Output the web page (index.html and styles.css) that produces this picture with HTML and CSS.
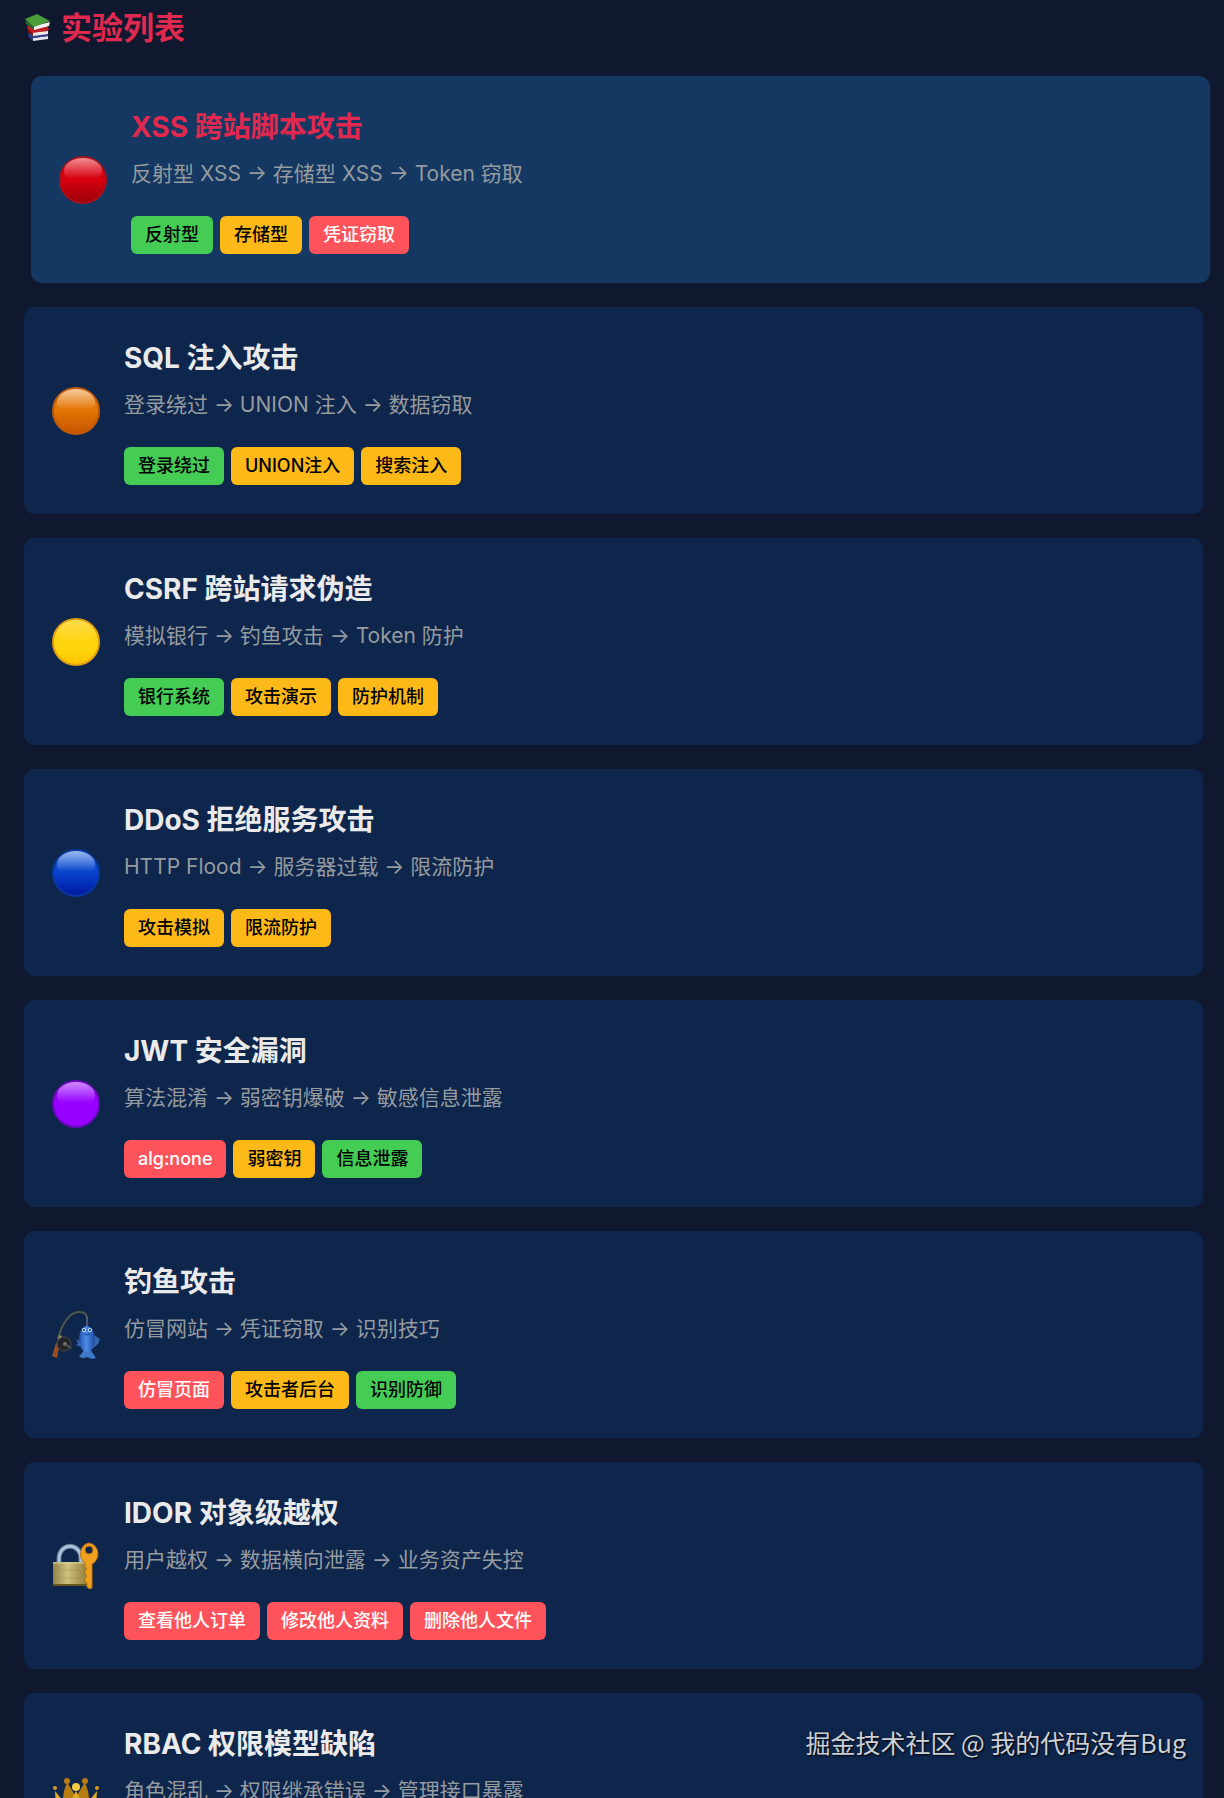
FILE: index.html
```html
<!DOCTYPE html>
<html lang="zh-CN">
<head>
<meta charset="utf-8">
<title>实验列表</title>
<link rel="stylesheet" href="styles.css">
</head>
<body>
<svg class="defs" aria-hidden="true">
  <defs>
    <linearGradient id="red" x1="0" y1="0" x2="0" y2="1"><stop offset="0" stop-color="#e2000f"/><stop offset=".5" stop-color="#d6000f"/><stop offset="1" stop-color="#9c0008"/></linearGradient>
    <linearGradient id="orange" x1="0" y1="0" x2="0" y2="1"><stop offset="0" stop-color="#ee8a1c"/><stop offset=".5" stop-color="#e27406"/><stop offset="1" stop-color="#c65400"/></linearGradient>
    <linearGradient id="yellow" x1="0" y1="0" x2="0" y2="1"><stop offset="0" stop-color="#ffd21c"/><stop offset=".6" stop-color="#ffd60e"/><stop offset="1" stop-color="#fbc400"/></linearGradient>
    <linearGradient id="blue" x1="0" y1="0" x2="0" y2="1"><stop offset="0" stop-color="#1f66dc"/><stop offset=".5" stop-color="#0642cc"/><stop offset="1" stop-color="#0019a0"/></linearGradient>
    <linearGradient id="shine" x1="0" y1="0" x2="0" y2="1"><stop offset="0" stop-color="#fff" stop-opacity=".55"/><stop offset=".8" stop-color="#fff" stop-opacity="0"/></linearGradient>
    <linearGradient id="brass" x1="0" y1="0" x2="1" y2="0"><stop offset="0" stop-color="#938344"/><stop offset=".4" stop-color="#cfc283"/><stop offset="1" stop-color="#8b7832"/></linearGradient>
    <linearGradient id="fish" x1="0" y1="0" x2="1" y2="0"><stop offset="0" stop-color="#1d4fae"/><stop offset=".45" stop-color="#4d8de8"/><stop offset="1" stop-color="#1c459c"/></linearGradient>
    <linearGradient id="gold" x1="0" y1="0" x2="0" y2="1"><stop offset="0" stop-color="#e9b52c"/><stop offset="1" stop-color="#c88a10"/></linearGradient>
  </defs>
</svg>
<main class="page">
  <h1 class="heading">
    <svg class="heading-icon" viewBox="0 0 28 28" aria-hidden="true">
      <path d="M5 19l5 7-1 1-5-5z" fill="#2b3c86"/><path d="M9 24l15-2v3L9 27z" fill="#e4e6f0"/><path d="M5 20l17-1 3 3-16 2z" fill="#31458f"/>
      <path d="M3 12l20-1 2 5-2 1-14 3-5-4z" fill="#c01c24"/><path d="M8 19l16-2v3L9 22z" fill="#f3ebe8"/><path d="M4 15l5 4v3l-5-4z" fill="#8c1016"/>
      <path d="M1 6l9 6v4L2 10z" fill="#26682a"/><path d="M10 12l16-4-1 4-15 4z" fill="#f0f0ee"/>
      <path d="M1 5l12-5 13 7-16 6z" fill="#4b9f3b"/>
    </svg>
    <span>实验列表</span>
  </h1>
  <div class="labs">
    <a class="card active" href="#xss">
      <svg class="icon" viewBox="0 0 48 48" aria-hidden="true"><circle cx="24" cy="24" r="23" fill="url(#red)" stroke="#a8101c" stroke-width="2"/><ellipse cx="24" cy="15" rx="19" ry="13" fill="url(#shine)"/></svg>
      <div class="info">
        <h2 class="title">XSS 跨站脚本攻击</h2>
        <p class="desc">反射型 XSS → 存储型 XSS → Token 窃取</p>
        <div class="tags"><span class="tag green">反射型</span><span class="tag amber">存储型</span><span class="tag red">凭证窃取</span></div>
      </div>
    </a>
    <a class="card" href="#sql">
      <svg class="icon" viewBox="0 0 48 48" aria-hidden="true"><circle cx="24" cy="24" r="23" fill="url(#orange)" stroke="#bf5a08" stroke-width="2"/><ellipse cx="24" cy="15" rx="19" ry="13" fill="url(#shine)"/></svg>
      <div class="info">
        <h2 class="title">SQL 注入攻击</h2>
        <p class="desc">登录绕过 → UNION 注入 → 数据窃取</p>
        <div class="tags"><span class="tag green">登录绕过</span><span class="tag amber">UNION注入</span><span class="tag amber">搜索注入</span></div>
      </div>
    </a>
    <a class="card" href="#csrf">
      <svg class="icon" viewBox="0 0 48 48" aria-hidden="true"><circle cx="24" cy="24" r="23" fill="url(#yellow)" stroke="#e0a010" stroke-width="2"/><ellipse cx="24" cy="15" rx="19" ry="13" fill="url(#shine)" opacity=".4"/></svg>
      <div class="info">
        <h2 class="title">CSRF 跨站请求伪造</h2>
        <p class="desc">模拟银行 → 钓鱼攻击 → Token 防护</p>
        <div class="tags"><span class="tag green">银行系统</span><span class="tag amber">攻击演示</span><span class="tag amber">防护机制</span></div>
      </div>
    </a>
    <a class="card" href="#ddos">
      <svg class="icon" viewBox="0 0 48 48" aria-hidden="true"><circle cx="24" cy="24" r="23" fill="url(#blue)" stroke="#0a38a0" stroke-width="2"/><ellipse cx="24" cy="15" rx="19" ry="13" fill="url(#shine)"/></svg>
      <div class="info">
        <h2 class="title">DDoS 拒绝服务攻击</h2>
        <p class="desc">HTTP Flood → 服务器过载 → 限流防护</p>
        <div class="tags"><span class="tag amber">攻击模拟</span><span class="tag amber">限流防护</span></div>
      </div>
    </a>
    <a class="card" href="#jwt">
      <svg class="icon" viewBox="0 0 48 48" aria-hidden="true"><circle cx="24" cy="24" r="23" fill="#9700ff" stroke="#6c08bd" stroke-width="2"/><ellipse cx="24" cy="15" rx="19" ry="13" fill="url(#shine)"/></svg>
      <div class="info">
        <h2 class="title">JWT 安全漏洞</h2>
        <p class="desc">算法混淆 → 弱密钥爆破 → 敏感信息泄露</p>
        <div class="tags"><span class="tag red">alg:none</span><span class="tag amber">弱密钥</span><span class="tag green">信息泄露</span></div>
      </div>
    </a>
    <a class="card" href="#phishing">
      <svg class="icon" viewBox="0 0 48 48" aria-hidden="true">
        <path d="M6 28C10 12 18 1 27 1c5 0 8 2 8 6" fill="none" stroke="#50584c" stroke-width="2"/><path d="M35 6v12" stroke="#7d8b9c" stroke-width="1"/>
        <path d="M7 24l3 1-2 8-3-1z" fill="#8c8d5a"/><path d="M4 32l4 1-3 14-5-2z" fill="#954d28"/>
        <circle cx="12" cy="33" r="7" fill="#24252b" stroke="#4c4a4b" stroke-width="1"/><circle cx="13" cy="33" r="2" fill="#777"/><path d="M13 33l6 4" stroke="#555" stroke-width="2"/>
        <path d="M29 31l-5-3 2 4-2 2 5 2zM42 24l6 4-2 5-6 5z" fill="#3567b0"/><path d="M33 38l-6 8q5 2 8 0 4 3 9 1l-6-9z" fill="#3e79c9"/>
        <ellipse cx="35" cy="28" rx="8" ry="13" fill="url(#fish)"/><circle cx="32" cy="19" r="2" fill="#c8eaff"/><circle cx="38" cy="19" r="2" fill="#c8eaff"/><circle cx="32" cy="19" r="1" fill="#123"/><circle cx="38" cy="19" r="1" fill="#123"/><path d="M32 23q3 2 6 0" fill="none" stroke="#123f8c"/>
      </svg>
      <div class="info">
        <h2 class="title">钓鱼攻击</h2>
        <p class="desc">仿冒网站 → 凭证窃取 → 识别技巧</p>
        <div class="tags"><span class="tag red">仿冒页面</span><span class="tag amber">攻击者后台</span><span class="tag green">识别防御</span></div>
      </div>
    </a>
    <a class="card" href="#idor">
      <svg class="icon" viewBox="0 0 48 48" aria-hidden="true">
        <path d="M7 22v-5C7 0 29 0 29 17v5" fill="none" stroke="#5c7494" stroke-width="5"/><path d="M7 22v-5C7 0 29 0 29 17v5" fill="none" stroke="#a9c0da" stroke-width="3"/>
        <rect x="1" y="20" width="36" height="24" rx="1" fill="url(#brass)"/><path d="M1 21h36" stroke="#e0d79b"/><path d="M1 28h36M1 36h36" stroke="#a4944f" stroke-width="1" opacity=".5"/><path d="M1 43h36" stroke="#665720" stroke-width="2"/>
        <path fill-rule="evenodd" d="M37 1a10 11 0 0 0-4 20v4l2 2-2 2v3l2 2-2 2v3l2 2v4q2 3 5 1V22a10 11 0 0 0-3-21zm0 3a4 4 0 0 1 0 8 4 4 0 0 1 0-8z" fill="#efa01e" stroke="#bd7310" stroke-width="1"/>
      </svg>
      <div class="info">
        <h2 class="title">IDOR 对象级越权</h2>
        <p class="desc">用户越权 → 数据横向泄露 → 业务资产失控</p>
        <div class="tags"><span class="tag red">查看他人订单</span><span class="tag red">修改他人资料</span><span class="tag red">删除他人文件</span></div>
      </div>
    </a>
    <a class="card" href="#rbac">
      <svg class="icon" viewBox="0 0 48 48" aria-hidden="true">
        <path d="M8 44l4-26 3-9 9 15 9-15 3 9 4 26z" fill="#b57d12"/><path d="M5 45L3 18l9 11 5 2 7-13 7 13 5-2 9-11-2 27q-19 5-38 0z" fill="url(#gold)"/>
        <circle cx="15" cy="8" r="3" fill="#b77c14"/><circle cx="33" cy="8" r="3" fill="#b77c14"/><circle cx="3" cy="15" r="2" fill="#d79b20"/><circle cx="45" cy="15" r="2" fill="#d79b20"/><circle cx="24" cy="14" r="4" fill="#f4c944"/>
      </svg>
      <div class="info">
        <h2 class="title">RBAC 权限模型缺陷</h2>
        <p class="desc">角色混乱 → 权限继承错误 → 管理接口暴露</p>
      </div>
    </a>
  </div>
</main>
<div class="watermark">掘金技术社区 @ 我的代码没有Bug</div>
</body>
</html>
```
FILE: styles.css
```css
* {
  box-sizing: border-box;
}

body {
  margin: 0;
  height: 100vh;
  overflow: hidden;
  position: relative;
  background: #10182f;
  color: #eaeaea;
  font-family: Inter, "Noto Sans CJK SC", sans-serif;
}

.defs {
  position: absolute;
  width: 0;
  height: 0;
}

.page {
  padding: 4px 21px 0 24px;
}

.heading {
  display: flex;
  align-items: center;
  gap: 9px;
  margin: 0 0 24px;
  color: #e0294f;
  font-size: 31px;
  line-height: 48px;
  font-weight: 700;
}

.heading-icon {
  width: 28px;
  height: 28px;
}

.labs {
  display: flex;
  flex-direction: column;
  gap: 24px;
}

.card {
  display: flex;
  align-items: center;
  gap: 24px;
  min-height: 207px;
  padding: 28px;
  border-radius: 11px;
  background: #0e254c;
  color: inherit;
  text-decoration: none;
}

.card.active {
  background: #143862;
  transform: translateX(7px);
}

.card.active .title {
  color: #e0294f;
}

.icon {
  flex: none;
  width: 48px;
  height: 48px;
}

.info {
  flex: 1;
  align-self: flex-start;
}

.title {
  margin: 0 0 6px;
  font-size: 28px;
  line-height: 46px;
  font-weight: 700;
}

.desc {
  margin: 0 0 24px;
  color: #959b9f;
  font-size: 21px;
  line-height: 36px;
}

.tags {
  display: flex;
  gap: 7px;
}

.tag {
  padding: 4px 14px;
  border-radius: 6px;
  font-size: 18px;
  line-height: 30px;
  font-weight: 500;
}

.green {
  background: #45cc55;
  color: #000;
}

.amber {
  background: #fdb918;
  color: #000;
}

.red {
  background: #ff535b;
  color: #fff;
}

.watermark {
  position: absolute;
  right: 38px;
  bottom: 38px;
  color: #cdd0d4;
  font-family: "Noto Sans CJK SC", sans-serif;
  font-size: 25px;
  line-height: 36px;
  text-shadow: 1px 1px 2px #000;
}
```
